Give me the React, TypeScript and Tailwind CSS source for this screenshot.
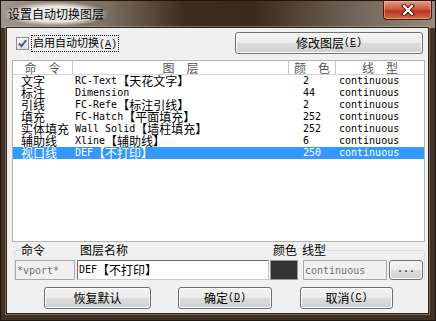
import React from 'react'

const rows = [
  { cmd: '文字', layer: 'RC-Text【天花文字】', color: '2', type: 'continuous' },
  { cmd: '标注', layer: 'Dimension', color: '44', type: 'continuous' },
  { cmd: '引线', layer: 'FC-Refe【标注引线】', color: '2', type: 'continuous' },
  { cmd: '填充', layer: 'FC-Hatch【平面填充】', color: '252', type: 'continuous' },
  { cmd: '实体填充', layer: 'Wall Solid【墙柱填充】', color: '252', type: 'continuous' },
  { cmd: '辅助线', layer: 'Xline【辅助线】', color: '6', type: 'continuous' },
  { cmd: '视口线', layer: 'DEF【不打印】', color: '250', type: 'continuous' },
]

const SELECTED = 6

// ascii runs get a 6px-wide mono, the rest stays at 12px cjk
const Mixed = ({ text }: { text: string }) => (
  <>
    {text
      .split(/([\x20-\x7e]+)/)
      .filter(Boolean)
      .map((part, i) =>
        /^[\x20-\x7e]+$/.test(part) ? (
          <span
            key={i}
            className="inline-block h-[12px] align-top font-['DejaVu_Sans_Mono',monospace] text-[10px] leading-[12px]"
          >
            {part}
          </span>
        ) : (
          <span key={i} className="inline-block h-[12px] align-top text-[12px] leading-[12px]">
            {part}
          </span>
        ),
      )}
  </>
)

const Key = ({ k }: { k: string }) => (
  <span className="font-['Liberation_Mono',monospace] text-[10px]">
    (<u>{k}</u>)
  </span>
)

const Btn = ({
  children,
  className = '',
}: {
  children: React.ReactNode
  className?: string
}) => (
  <button
    className={`flex items-center justify-center rounded-[3px] border border-[#707070] bg-[linear-gradient(#f2f2f2_0%,#ebebeb_50%,#dddddd_51%,#cfcfcf_100%)] text-[12px] leading-[14px] text-black shadow-[inset_0_0_0_1px_#fcfcfc] ${className}`}
  >
    {children}
  </button>
)

const App: React.FC = () => {
  return (
    <div className="flex h-[321px] w-[436px] flex-col border border-[#1f1610] bg-[#3f3126] font-['Noto_Sans_CJK_SC',sans-serif] text-black">
      {/* title bar */}
      <div className="flex h-[27px] shrink-0 items-start justify-between bg-[linear-gradient(90deg,#9d958d_0%,#7d7064_24%,#3f2e20_42%,#3a2a1c_58%,#6a5c50_78%,#948a80_100%)]">
        <span className="ml-[3px] mt-[1px] bg-[radial-gradient(ellipse_at_center,rgba(240,238,235,0.95)_45%,rgba(240,238,235,0)_72%)] px-[4px] py-[5px] text-[12px] leading-[14px]">
          设置自动切换图层
        </span>
        <div className="mr-[3px] flex h-[19px] w-[49px] items-center justify-center rounded-b-[4px] border border-t-0 border-[#4a1a10] bg-[linear-gradient(#e4988a_0%,#cf5a40_45%,#b8341c_55%,#d06a4c_100%)] shadow-[inset_0_0_0_1px_rgba(255,200,180,0.5)]">
          <svg width="14" height="12" viewBox="0 0 14 12">
            <path d="M3 2 L11 10 M11 2 L3 10" stroke="#4a1c12" strokeWidth="4.2" strokeLinecap="square" />
            <path d="M3 2 L11 10 M11 2 L3 10" stroke="#ffffff" strokeWidth="2.2" strokeLinecap="square" />
          </svg>
        </div>
      </div>

      {/* client */}
      <div className="mb-[7px] ml-[6px] mr-[7px] flex flex-1 flex-col bg-[#f0f0f0] shadow-[0_0_0_1px_#2e2219,0_0_0_2px_rgba(220,210,200,0.35)]">
        <div className="mt-[4px] flex h-[22px] items-center justify-between pl-[9px] pr-[5px]">
          <div className="flex items-center">
            <div className="flex h-[13px] w-[13px] items-center justify-center border border-[#8f8f8f] bg-[linear-gradient(#f4f4f4,#e2e2e2)]">
              <svg width="11" height="11" viewBox="0 0 11 11">
                <path d="M2 5.5 L4.5 8.2 L9.2 2.2" fill="none" stroke="#3e5c9e" strokeWidth="2" />
              </svg>
            </div>
            <span className="ml-[2px] border border-dotted border-black px-[1px] text-[11px] leading-[13px]">
              启用自动切换<Key k="A" />
            </span>
          </div>
          <Btn className="h-[22px] w-[188px]">
            修改图层<Key k="E" />
          </Btn>
        </div>

        {/* list */}
        <div className="ml-[5px] mt-[6px] h-[182px] w-[413px] border border-[#b4b4b4] bg-white">
          <div className="flex h-[14px] border-b border-[#d5d5d5] text-[12px] leading-[13px] text-[#555]">
            <div className="w-[60px] border-r border-[#c8c8c8] text-center">命　令</div>
            <div className="w-[216px] border-r border-[#c8c8c8] text-center">图　层</div>
            <div className="w-[47px] border-r border-[#c8c8c8] text-center">颜　色</div>
            <div className="flex-1 text-center">线　型</div>
          </div>
          {rows.map((r, i) => (
            <div
              key={i}
              className={`flex h-[12px] whitespace-pre leading-[12px] ${
                i === SELECTED ? 'bg-[#3399ff] text-white' : 'text-black'
              }`}
            >
              <div className="h-[12px] w-[60px] pl-[8px]">
                <Mixed text={r.cmd} />
              </div>
              <div className="h-[12px] w-[216px] pl-[2px]">
                <Mixed text={r.layer} />
              </div>
              <div className="h-[12px] w-[47px] pl-[14px]">
                <Mixed text={r.color} />
              </div>
              <div className="h-[12px] flex-1 pl-[3px]">
                <Mixed text={r.type} />
              </div>
            </div>
          ))}
        </div>

        {/* edit group */}
        <fieldset className="ml-[7px] mt-[1px] w-[411px] rounded-t-[3px] border border-b-0 border-[#d5dfe5]">
          <legend className="ml-[5px] flex h-[14px] w-[308px] text-[12px] leading-[14px]">
            <span className="ml-[1px]">命令</span>
            <span className="ml-[35px]">图层名称</span>
            <span className="ml-[145px]">颜色</span>
            <span className="ml-[5px]">线型</span>
          </legend>
          <div className="mt-[3px] flex h-[20px] items-stretch">
            <div className="flex w-[60px] items-center border border-[#a9a9a9] bg-[#f0f0f0] pl-[1px] font-['DejaVu_Sans_Mono',monospace] text-[10px] text-[#707070]">
              *vport*
            </div>
            <div className="ml-[2px] flex w-[192px] items-center border border-[#c8c8c8] border-l-[#6e6e6e] border-t-[#6e6e6e] bg-white pl-[1px]">
              <Mixed text="DEF【不打印】" />
            </div>
            <div className="ml-[1px] w-[28px] border border-[#9a9a9a] bg-[#333333]" />
            <div className="ml-[5px] flex w-[84px] items-center border border-[#a9a9a9] bg-[#f0f0f0] pl-[1px] font-['DejaVu_Sans_Mono',monospace] text-[10px] text-[#707070]">
              continuous
            </div>
            <Btn className="ml-[2px] w-[34px] font-['Liberation_Mono',monospace] !text-[10px]">...</Btn>
          </div>
        </fieldset>

        {/* bottom buttons */}
        <div className="mt-[7px] flex pl-[37px]">
          <Btn className="h-[22px] w-[107px]">恢复默认</Btn>
          <Btn className="ml-[27px] h-[22px] w-[94px]">
            确定<Key k="D" />
          </Btn>
          <Btn className="ml-[28px] h-[22px] w-[93px]">
            取消<Key k="C" />
          </Btn>
        </div>
      </div>
    </div>
  )
}

export default App
